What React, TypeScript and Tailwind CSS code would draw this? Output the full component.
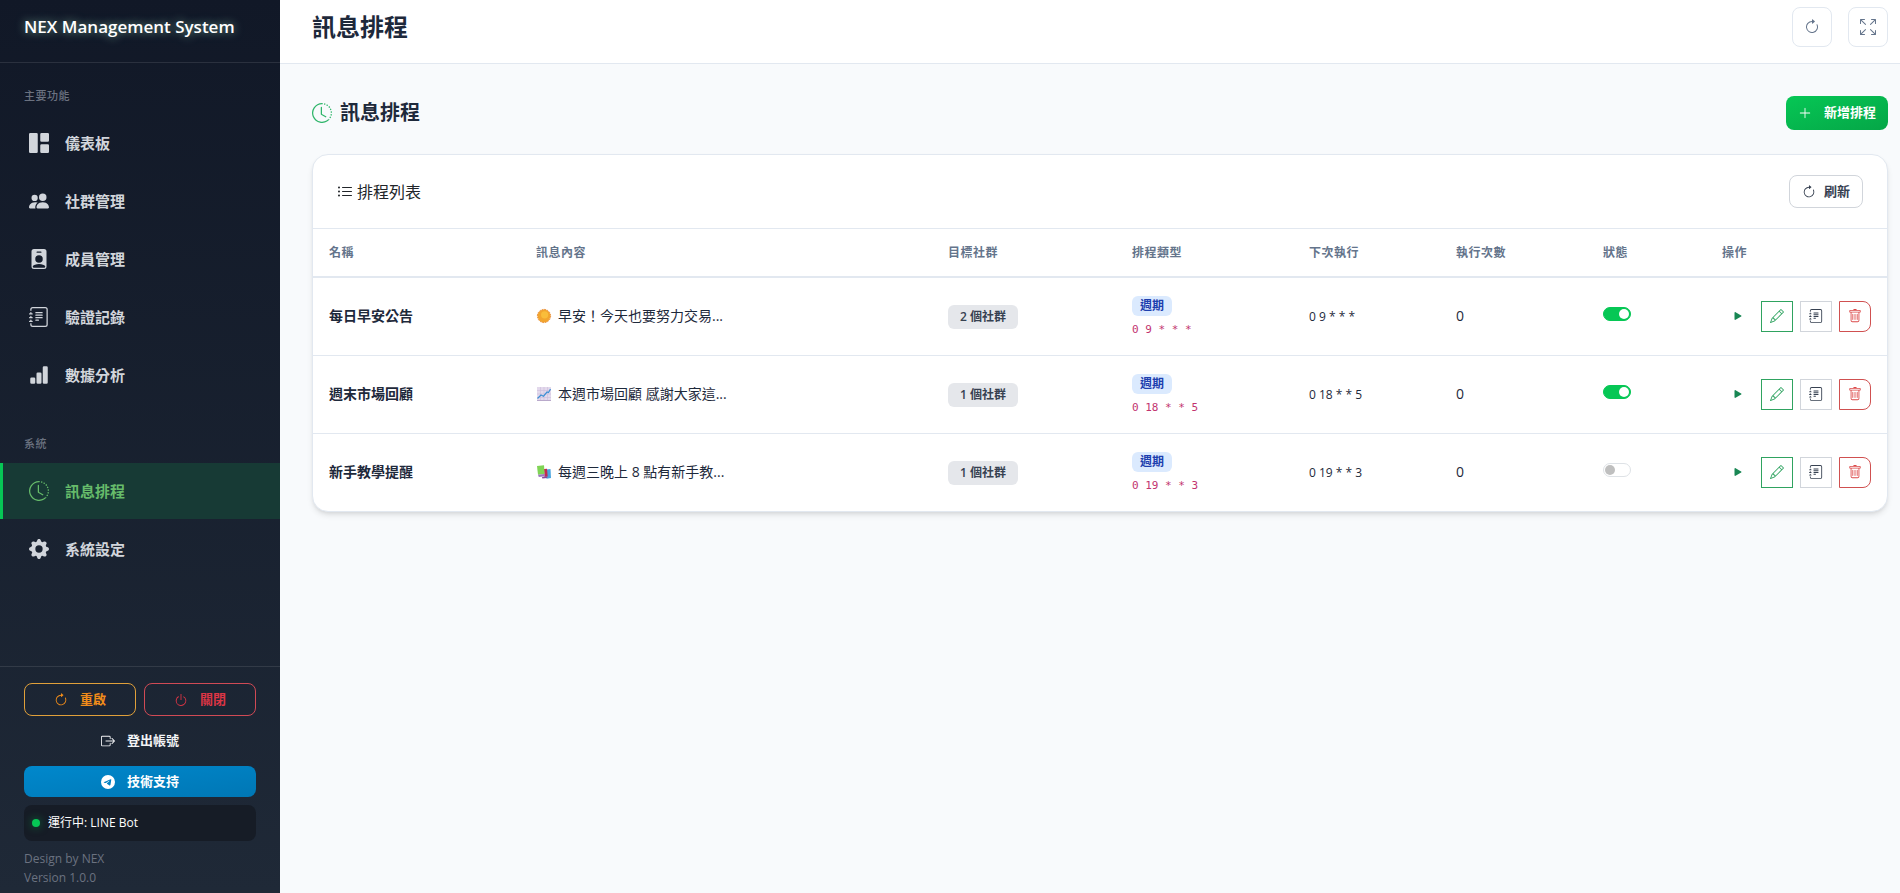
import type { ReactNode } from "react";
import type { IconType } from "react-icons";
import {
  BsArrowClockwise,
  BsArrowsFullscreen,
  BsBarChartFill,
  BsBoxArrowRight,
  BsClockHistory,
  BsGearFill,
  BsGrid1X2Fill,
  BsJournalText,
  BsListUl,
  BsPencil,
  BsPeopleFill,
  BsPersonBadgeFill,
  BsPlayFill,
  BsPlusLg,
  BsPower,
  BsTelegram,
  BsTrash,
} from "react-icons/bs";

type NavItem = { label: string; icon: IconType; active?: boolean };

const mainNav: NavItem[] = [
  { label: "儀表板", icon: BsGrid1X2Fill },
  { label: "社群管理", icon: BsPeopleFill },
  { label: "成員管理", icon: BsPersonBadgeFill },
  { label: "驗證記錄", icon: BsJournalText },
  { label: "數據分析", icon: BsBarChartFill },
];

const systemNav: NavItem[] = [
  { label: "訊息排程", icon: BsClockHistory, active: true },
  { label: "系統設定", icon: BsGearFill },
];

const columns = [
  { label: "名稱", width: "w-[207px]" },
  { label: "訊息內容", width: "w-[412px]" },
  { label: "目標社群", width: "w-[184px]" },
  { label: "排程類型", width: "w-[177px]" },
  { label: "下次執行", width: "w-[147px]" },
  { label: "執行次數", width: "w-[147px]" },
  { label: "狀態", width: "w-[119px]" },
  { label: "操作", width: "w-[181px]" },
];

const schedules = [
  { name: "每日早安公告", emoji: <SunEmoji />, message: "早安！今天也要努力交易...", groups: 2, cron: "0 9 * * *", runs: 0, enabled: true },
  { name: "週末市場回顧", emoji: <ChartEmoji />, message: "本週市場回顧 感謝大家這...", groups: 1, cron: "0 18 * * 5", runs: 0, enabled: true },
  { name: "新手教學提醒", emoji: <BooksEmoji />, message: "每週三晚上 8 點有新手教...", groups: 1, cron: "0 19 * * 3", runs: 0, enabled: false },
];

function SunEmoji() {
  return (
    <svg viewBox="0 0 16 16" className="size-4" aria-hidden="true">
      <circle cx="8" cy="8" r="6.4" fill="#f2a52e" />
      <circle cx="8" cy="8" r="6.6" fill="none" stroke="#e8862a" strokeWidth="1" strokeDasharray="1.6 1" />
      <circle cx="8.6" cy="6.8" r="3.6" fill="#f9bd3a" />
    </svg>
  );
}

function ChartEmoji() {
  return (
    <svg viewBox="0 0 16 16" className="size-4" aria-hidden="true">
      <rect x="1" y="1" width="14" height="14" fill="#e3d9ec" />
      <path d="M1 4.5h14M1 8h14M1 11.5h14M4.5 1v14M8 1v14M11.5 1v14" stroke="#cbbcdc" strokeWidth=".6" />
      <path d="M1 14.5h14" stroke="#b9a9cb" />
      <path d="M1.5 12.5 5 9l2.5 1.2L11 6l1.5.5 2-3.5" fill="none" stroke="#3d8fd4" strokeWidth="1.2" />
    </svg>
  );
}

function BooksEmoji() {
  return (
    <svg viewBox="0 0 16 16" className="size-4" aria-hidden="true">
      <path d="m10 5.500 4.500-.5.500 9-4.500.8z" fill="#4aa5df" />
      <path d="m8 5 3-.3.700 7.800-3.200.5z" fill="#c22a50" />
      <path d="m1 2 7-.8.500 8.800-6.500.8z" fill="#80d455" />
      <path d="m2 10.800 6.500-.8.300 2.200-6 .8z" fill="#9a78bd" />
      <path d="m6 13 5-.8.300 1.800-5 .6z" fill="#86489a" />
    </svg>
  );
}

function NavSection({ title, items }: { title: string; items: NavItem[] }) {
  return (
    <div>
      <div className="px-6 text-[11px] leading-4 font-medium tracking-[0.5px] text-[#6b7280]">{title}</div>
      <ul className="mt-[11px] flex flex-col gap-0.5">
        {items.map(({ label, icon: Icon, active }) => (
          <li key={label}>
            <a
              href="#"
              aria-current={active ? "page" : undefined}
              className={
                active
                  ? "flex h-14 items-center gap-4 border-l-[3px] border-[#06c755] bg-[#173a35] pl-[26px] text-[15px] font-semibold text-[#66bb6a]"
                  : "flex h-14 items-center gap-4 border-l-[3px] border-transparent pl-[26px] text-[15px] font-semibold text-[#d1d5db]"
              }
            >
              <Icon className="size-5" />
              {label}
            </a>
          </li>
        ))}
      </ul>
    </div>
  );
}

function Sidebar() {
  return (
    <aside className="flex w-[280px] shrink-0 flex-col bg-linear-to-b from-[#111827] to-[#1f2937]">
      <div className="flex h-[63px] items-center border-b border-white/10 px-6 pb-2">
        <span className="text-[17px] leading-6 font-semibold text-white [text-shadow:0_0_10px_rgba(180,255,215,0.6)]">
          NEX Management System
        </span>
      </div>
      <nav className="flex flex-1 flex-col gap-[33px] pt-[25px]">
        <NavSection title="主要功能" items={mainNav} />
        <NavSection title="系統" items={systemNav} />
      </nav>
      <div className="flex flex-col gap-2 border-t border-white/10 px-6 pt-4 pb-1.5">
        <div className="grid grid-cols-2 gap-2 text-[13px] font-bold">
          <button className="flex h-[33px] items-center justify-center gap-3 rounded-lg border border-[#e0a03a] text-[#f08c1a]">
            <BsArrowClockwise className="size-3.5" />
            重啟
          </button>
          <button className="flex h-[33px] items-center justify-center gap-3 rounded-lg border border-[#d04a55] text-[#dc3545]">
            <BsPower className="size-3.5" />
            關閉
          </button>
        </div>
        <button className="flex h-[34px] items-center justify-center gap-3 text-[13px] font-bold text-[#f3f4f6]">
          <BsBoxArrowRight className="size-3.5" />
          登出帳號
        </button>
        <a
          href="#"
          className="flex h-[31px] items-center justify-center gap-3 rounded-lg bg-linear-to-br from-[#0088cc] to-[#0077b5] text-[13px] font-bold text-white"
        >
          <BsTelegram className="size-3.5" />
          技術支持
        </a>
        <div className="flex h-9 items-center gap-2 rounded-lg bg-[#161c26] px-2 text-xs text-white">
          <span className="size-2 rounded-full bg-[#06c755] shadow-[0_0_8px_#06c75580]" />
          運行中: LINE Bot
        </div>
        <div className="text-xs leading-[19px] text-[#6b7280]">
          <div>Design by NEX</div>
          <div>Version 1.0.0</div>
        </div>
      </div>
    </aside>
  );
}

function HeaderButton({ label, children }: { label: string; children: ReactNode }) {
  return (
    <button
      aria-label={label}
      className="flex size-10 items-center justify-center rounded-lg border border-[#e2e8f0] bg-white text-[#64748b]"
    >
      {children}
    </button>
  );
}

function ScheduleTable() {
  return (
    <table className="w-full table-fixed border-collapse text-left">
      <thead>
        <tr className="h-12 border-b-2 border-[#e2e8f0]">
          {columns.map((c) => (
            <th key={c.label} className={`${c.width} px-4 text-xs font-semibold tracking-[0.5px] text-[#64748b]`}>
              {c.label}
            </th>
          ))}
        </tr>
      </thead>
      <tbody>
        {schedules.map((s) => (
          <tr key={s.name} className="h-[78px] border-b border-[#e2e8f0] text-sm text-[#1e293b] last:border-b-0">
            <td className="px-4 font-bold">{s.name}</td>
            <td className="px-4">
              <div className="flex items-center gap-1.5">
                {s.emoji}
                {s.message}
              </div>
            </td>
            <td className="px-4 pt-0.5">
              <span className="inline-flex h-6 items-center rounded-md bg-[#e5e7eb] px-3 text-xs font-semibold text-[#374151]">
                {s.groups} 個社群
              </span>
            </td>
            <td className="px-4 pt-1">
              <div className="flex flex-col items-start gap-1">
                <span className="flex h-5 items-center rounded-md bg-[#dbeafe] px-2 text-xs font-semibold text-[#1e40af]">
                  週期
                </span>
                <code className="font-['DejaVu_Sans_Mono',monospace] text-[11px] leading-5 text-[#c2346f]">{s.cron}</code>
              </div>
            </td>
            <td className="px-4 pt-0.5 text-xs">{s.cron}</td>
            <td className="px-4">{s.runs}</td>
            <td className="px-4">
              <input
                type="checkbox"
                role="switch"
                defaultChecked={s.enabled}
                aria-label={`${s.name} 狀態`}
                className="mb-1 flex h-3.5 w-7 appearance-none items-center rounded-full border border-[#dee2e6] bg-white px-px align-middle before:size-2.5 before:rounded-full before:bg-[#bfbfbf] checked:justify-end checked:border-[#06c755] checked:bg-[#06c755] checked:before:bg-white"
              />
            </td>
            <td className="px-4">
              <div className="flex items-center justify-end gap-[7px]">
                <button aria-label="執行" className="flex h-8 w-8 items-center justify-center text-[#198754]">
                  <BsPlayFill className="size-3.5" />
                </button>
                <button aria-label="編輯" className="flex h-[31px] w-8 items-center justify-center border border-[#2fa360] text-[#2fa360]">
                  <BsPencil className="size-3.5" />
                </button>
                <button aria-label="記錄" className="flex h-[31px] w-8 items-center justify-center border border-[#d1d5db] text-[#374151]">
                  <BsJournalText className="size-3.5" />
                </button>
                <button aria-label="刪除" className="flex h-[31px] w-8 items-center justify-center rounded-r-lg border border-[#d05050] text-[#dc4a4a]">
                  <BsTrash className="size-3.5" />
                </button>
              </div>
            </td>
          </tr>
        ))}
      </tbody>
    </table>
  );
}

export default function App() {
  return (
    <div className="flex min-h-screen bg-[#f8fafc] font-['Open_Sans','Noto_Sans_CJK_TC',sans-serif] text-[#1e293b]">
      <Sidebar />
      <div className="flex min-w-0 flex-1 flex-col">
        <header className="flex h-16 items-center justify-between border-b border-[#e2e8f0] bg-white pr-3 pb-2.5 pl-8">
          <h1 className="text-2xl font-semibold">訊息排程</h1>
          <div className="flex gap-4">
            <HeaderButton label="重新整理">
              <BsArrowClockwise className="size-4" />
            </HeaderButton>
            <HeaderButton label="全螢幕">
              <BsArrowsFullscreen className="size-4" />
            </HeaderButton>
          </div>
        </header>
        <main className="pt-8 pr-3 pb-8 pl-8">
          <div className="mb-6 flex items-center justify-between">
            <h2 className="flex items-center gap-2 text-xl font-semibold">
              <BsClockHistory className="size-5 text-[#2fb56a]" />
              訊息排程
            </h2>
            <button className="flex h-[34px] items-center gap-3 rounded-lg bg-linear-to-br from-[#06c755] to-[#05a647] px-3 text-[13px] font-bold text-white">
              <BsPlusLg className="size-3.5" />
              新增排程
            </button>
          </div>
          <section className="overflow-hidden rounded-2xl border border-[#e2e8f0] bg-white shadow-md">
            <div className="flex h-[74px] items-center justify-between border-b border-[#e2e8f0] px-6">
              <h3 className="flex items-center gap-1 text-base text-[#212529]">
                <BsListUl className="size-4" />
                排程列表
              </h3>
              <button className="flex h-[33px] items-center gap-2 rounded-lg border border-[#d1d5db] px-3 text-[13px] font-semibold text-[#374151]">
                <BsArrowClockwise className="size-3.5" />
                刷新
              </button>
            </div>
            <ScheduleTable />
          </section>
        </main>
      </div>
    </div>
  );
}
